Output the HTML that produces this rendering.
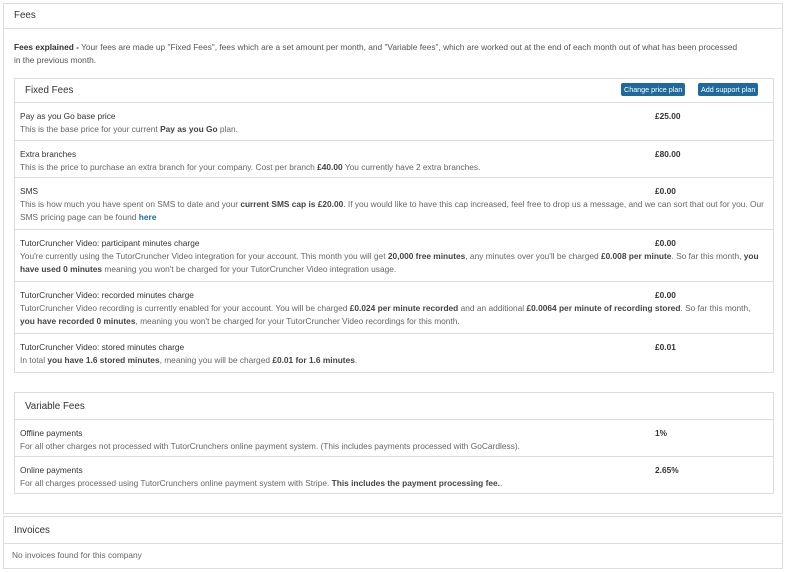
<!DOCTYPE html>
<html><head><meta charset="utf-8"><style>
*{box-sizing:border-box;margin:0;padding:0}
body{width:786px;height:573px;background:#fff;font-family:"Liberation Sans",sans-serif;font-size:8.35px;color:#555;position:relative;overflow:hidden}
.panel{position:absolute;border:1px solid #ddd;background:#fff}
.ph{border-bottom:1px solid #ddd;font-size:9.8px;color:#333;padding-left:10px}
.row{position:absolute;left:0;right:0;border-bottom:1px solid #ddd;padding:7px 0 0 5px;line-height:13px;white-space:nowrap}
.row .t{color:#333}
.row .d{color:#666}
.row b{color:#444}
.amt{position:absolute;left:640px;top:7px;font-weight:bold;color:#333}
.btn{position:absolute;top:4px;height:13px;background:#1e6b9a;color:#fff;font-size:7.2px;line-height:13px;padding:0 3px;border-radius:2px}
</style></head><body>
<div class="panel" style="left:3px;top:3px;width:780px;height:511px">
 <div class="ph" style="height:25px;line-height:23px">Fees</div>
 <div style="position:absolute;left:10px;top:37px;line-height:13px;white-space:nowrap;color:#555"><b style="color:#333">Fees explained -</b> Your fees are made up "Fixed Fees", fees which are a set amount per month, and "Variable fees", which are worked out at the end of each month out of what has been processed<br>in the previous month.</div>
</div>
<div class="panel" style="left:14px;top:78px;width:760px;height:295px">
 <div class="ph" style="height:24px;line-height:24px">Fixed Fees</div>
 <div class="btn" style="left:606px">Change price plan</div>
 <div class="btn" style="left:683px">Add support plan</div>
 <div class="row" style="top:24px;height:38px"><div class="t">Pay as you Go base price</div><div class="d">This is the base price for your current <b>Pay as you Go</b> plan.</div><div class="amt">£25.00</div></div>
 <div class="row" style="top:62px;height:37px"><div class="t">Extra branches</div><div class="d">This is the price to purchase an extra branch for your company. Cost per branch <b>£40.00</b> You currently have 2 extra branches.</div><div class="amt">£80.00</div></div>
 <div class="row" style="top:99px;height:52px"><div class="t">SMS</div><div class="d">This is how much you have spent on SMS to date and your <b>current SMS cap is £20.00</b>. If you would like to have this cap increased, feel free to drop us a message, and we can sort that out for you. Our<br>SMS pricing page can be found <b style="color:#1e6b9a">here</b></div><div class="amt">£0.00</div></div>
 <div class="row" style="top:151px;height:52px"><div class="t">TutorCruncher Video: participant minutes charge</div><div class="d">You're currently using the TutorCruncher Video integration for your account. This month you will get <b>20,000 free minutes</b>, any minutes over you'll be charged <b>£0.008 per minute</b>. So far this month, <b>you</b><br><b>have used 0 minutes</b> meaning you won't be charged for your TutorCruncher Video integration usage.</div><div class="amt">£0.00</div></div>
 <div class="row" style="top:203px;height:52px"><div class="t">TutorCruncher Video: recorded minutes charge</div><div class="d">TutorCruncher Video recording is currently enabled for your account. You will be charged <b>£0.024 per minute recorded</b> and an additional <b>£0.0064 per minute of recording stored</b>. So far this month,<br><b>you have recorded 0 minutes</b>, meaning you won't be charged for your TutorCruncher Video recordings for this month.</div><div class="amt">£0.00</div></div>
 <div class="row" style="top:255px;height:38px;border-bottom:none"><div class="t">TutorCruncher Video: stored minutes charge</div><div class="d">In total <b>you have 1.6 stored minutes</b>, meaning you will be charged <b>£0.01 for 1.6 minutes</b>.</div><div class="amt">£0.01</div></div>
</div>
<div class="panel" style="left:14px;top:392px;width:760px;height:102px">
 <div class="ph" style="height:27px;line-height:27px">Variable Fees</div>
 <div class="row" style="top:27px;height:37px"><div class="t">Offline payments</div><div class="d">For all other charges not processed with TutorCrunchers online payment system. (This includes payments processed with GoCardless).</div><div class="amt">1%</div></div>
 <div class="row" style="top:64px;height:37px;border-bottom:none"><div class="t">Online payments</div><div class="d">For all charges processed using TutorCrunchers online payment system with Stripe. <b>This includes the payment processing fee.</b>.</div><div class="amt">2.65%</div></div>
</div>
<div class="panel" style="left:3px;top:516px;width:780px;height:53px">
 <div class="ph" style="height:27px;line-height:27px">Invoices</div>
 <div style="padding:6px 0 0 8px;color:#666">No invoices found for this company</div>
</div>
</body></html>
